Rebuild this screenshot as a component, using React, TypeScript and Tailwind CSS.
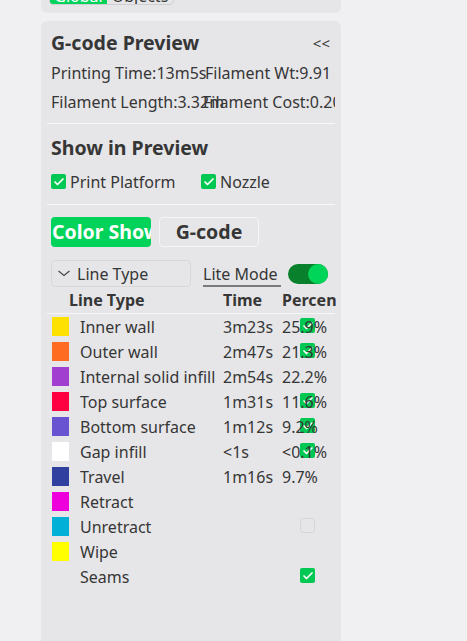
import { Check } from 'lucide-react';

const font = { fontFamily: '"Noto Sans", "Open Sans", sans-serif' };

const lineTypes = [
  { name: 'Inner wall', color: 'bg-[#ffe100]', time: '3m23s', pct: '25.9%', check: 'on' },
  { name: 'Outer wall', color: 'bg-[#ff6b21]', time: '2m47s', pct: '21.3%', check: 'on' },
  { name: 'Internal solid infill', color: 'bg-[#a13fd0]', time: '2m54s', pct: '22.2%', check: '' },
  { name: 'Top surface', color: 'bg-[#ff0041]', time: '1m31s', pct: '11.6%', check: 'on' },
  { name: 'Bottom surface', color: 'bg-[#6a53d1]', time: '1m12s', pct: '9.2%', check: 'on' },
  { name: 'Gap infill', color: 'bg-white', time: '<1s', pct: '<0.1%', check: 'on' },
  { name: 'Travel', color: 'bg-[#2f409e]', time: '1m16s', pct: '9.7%', check: '' },
  { name: 'Retract', color: 'bg-[#ee00dd]', time: '', pct: '', check: '' },
  { name: 'Unretract', color: 'bg-[#00b0d6]', time: '', pct: '', check: 'off' },
  { name: 'Wipe', color: 'bg-[#ffff00]', time: '', pct: '', check: '' },
  { name: 'Seams', color: '', time: '', pct: '', check: 'on' },
];

function Tick({ on }: { on: boolean }) {
  return on ? (
    <span className="flex size-[15px] items-center justify-center rounded-[2px] bg-[#00c853]">
      <Check className="size-[12px] text-white" strokeWidth={3.5} />
    </span>
  ) : (
    <span className="block size-[15px] rounded-[3px] border border-[#d6d6da]" />
  );
}

export default function App() {
  return (
    <div
      className="flex h-[641px] w-[467px] flex-col overflow-hidden bg-[#f0f0f2] pl-[41px] text-[#363636]"
      style={font}
    >
      {/* bottom of the previous panel */}
      <div className="flex h-[13px] w-[300px] items-end overflow-hidden rounded-b-[6px] bg-[#e6e6e9] pb-[8px] pl-[8px]">
        <div className="flex h-[20px] shrink-0 overflow-hidden rounded-[4px] border border-[#cfcfd3] text-[16px] leading-[20px]">
          <span className="w-[57px] bg-[#00d25a] text-center text-white">Global</span>
          <span className="w-[66px] text-center">Objects</span>
        </div>
      </div>

      <div className="mt-[8px] flex w-[300px] flex-1 flex-col rounded-t-[6px] bg-[#e6e6e9] px-[10px] pt-[7px]">
        <div className="flex h-[30px] items-center justify-between">
          <span className="text-[19.5px] font-bold">G-code Preview</span>
          <span className="mr-[1px] text-[15px]">&lt;&lt;</span>
        </div>

        <div className="w-[284px] overflow-hidden text-[16px] whitespace-nowrap">
          <div className="grid h-[29px] grid-cols-[154px_1fr] items-center">
            <span>Printing Time:13m5s</span>
            <span>Filament Wt:9.91</span>
          </div>
          <div className="grid h-[29px] grid-cols-[152px_1fr] items-center">
            <span>Filament Length:3.32m</span>
            <span>Filament Cost:0.20</span>
          </div>
        </div>

        <div className="-mx-[4px] mt-[7px] h-px bg-[#f7f7f8]" />

        <div className="mt-[9px] flex h-[30px] items-center text-[19.5px] font-bold">Show in Preview</div>

        <div className="mt-[4px] flex h-[29px] items-center text-[16px]">
          <div className="flex w-[150px] items-center gap-[4px]">
            <Tick on />
            <span>Print Platform</span>
          </div>
          <div className="flex items-center gap-[4px]">
            <Tick on />
            <span>Nozzle</span>
          </div>
        </div>

        <div className="-mx-[4px] mt-[8px] h-px bg-[#f7f7f8]" />

        <div className="mt-[12px] flex h-[30px] gap-[8px] text-[19.5px] font-bold">
          <div className="w-[100px] overflow-hidden rounded-[4px] bg-[#00d25a] pl-[1px] leading-[30px] whitespace-nowrap text-white">
            Color Show
          </div>
          <div className="w-[100px] rounded-[4px] border border-[#f5f5f6] text-center leading-[28px]">G-code</div>
        </div>

        <div className="mt-[13px] flex h-[27px] items-center text-[16px]">
          <div className="flex h-[27px] w-[140px] shrink-0 items-center gap-[7px] rounded-[4px] border border-[#d8d8dc] pl-[6px]">
            <svg width="12" height="7" viewBox="0 0 12 7" fill="none" stroke="#444" strokeWidth="1.1">
              <path d="M0.5 1 L6 5.5 L11.5 1" />
            </svg>
            <span>Line Type</span>
          </div>
          <span className="mt-[3px] ml-[12px] w-[78px] shrink-0 border-b-2 border-[#7a7a7a] leading-[21px] whitespace-nowrap">
            Lite Mode
          </span>
          <div className="ml-[7px] flex h-[20px] w-[40px] shrink-0 items-center justify-end rounded-full bg-[#08802c]">
            <span className="size-[20px] rounded-full bg-[#00d459]" />
          </div>
        </div>

        <div className="-mr-[5px] overflow-hidden">
          <div className="grid h-[26px] w-[300px] grid-cols-[172px_59px_1fr] items-center text-[16px] font-bold whitespace-nowrap">
            <span className="pl-[18px]">Line Type</span>
            <span>Time</span>
            <span>Percent</span>
          </div>
        </div>
        <div className="-mx-[4px] h-px bg-[#f7f7f8]" />

        <div className="text-[16px] whitespace-nowrap">
          {lineTypes.map((row) => (
            <div key={row.name} className="relative grid h-[25px] grid-cols-[29px_143px_59px_1fr] items-center">
              {row.check && (
                <span className="absolute top-[4px] left-[249px]">
                  <Tick on={row.check === 'on'} />
                </span>
              )}
              <span className={`ml-[1px] h-[19px] w-[17px] ${row.color}`} />
              <span>{row.name}</span>
              <span>{row.time}</span>
              <span className="relative">{row.pct}</span>
            </div>
          ))}
        </div>
      </div>
    </div>
  );
}
